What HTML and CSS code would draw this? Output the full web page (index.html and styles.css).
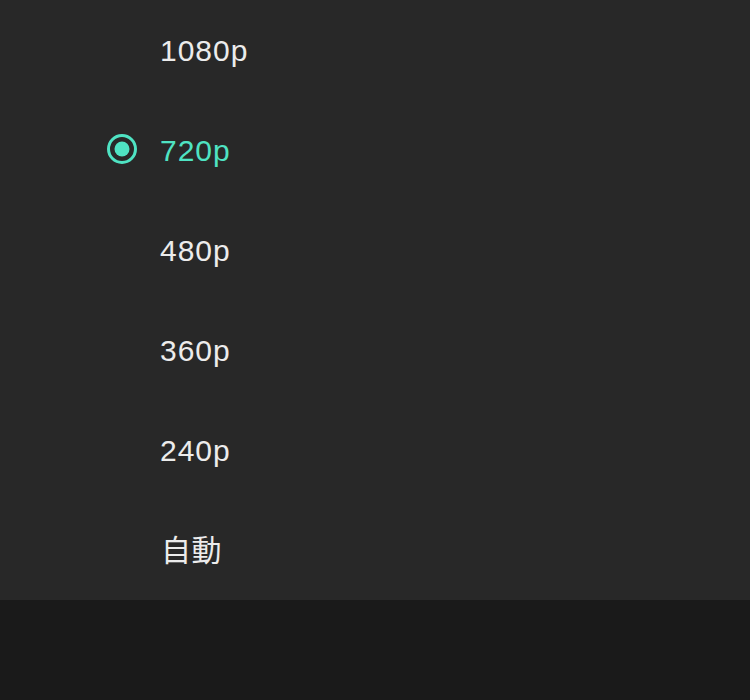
FILE: index.html
```html
<!DOCTYPE html>
<html lang="ja">
<head>
<meta charset="utf-8">
<link rel="stylesheet" href="styles.css">
</head>
<body>
<div class="sheet">
  <ul class="options">
    <li class="option"><span class="mark"></span><span class="label">1080p</span></li>
    <li class="option selected"><span class="mark"><svg width="30" height="30" viewBox="0 0 30 30"><circle cx="15" cy="15" r="13.5" fill="none" stroke="currentColor" stroke-width="3"/><circle cx="15" cy="15" r="7.5" fill="currentColor"/></svg></span><span class="label">720p</span></li>
    <li class="option"><span class="mark"></span><span class="label">480p</span></li>
    <li class="option"><span class="mark"></span><span class="label">360p</span></li>
    <li class="option"><span class="mark"></span><span class="label">240p</span></li>
    <li class="option"><span class="mark"></span><span class="label cjk">自動</span></li>
  </ul>
</div>
<div class="backdrop"></div>
</body>
</html>
```
FILE: styles.css
```css
html, body {
  margin: 0;
  padding: 0;
  background: #1a1a1a;
}
body {
  width: 750px;
  height: 700px;
  font-family: "Liberation Sans", "Noto Sans CJK JP", sans-serif;
}
.sheet {
  background: #282828;
  height: 600px;
}
.options {
  list-style: none;
  margin: 0;
  padding: 0;
}
.option {
  height: 100px;
  display: flex;
  align-items: center;
  padding-left: 107px;
  color: #ececec;
  font-size: 30px;
}
.mark {
  width: 30px;
  height: 30px;
  margin-right: 23px;
  display: flex;
  margin-top: -2px;
}
.label {
  line-height: 1;
  letter-spacing: 1px;
  padding-top: 2px;
}
.cjk {
  letter-spacing: 0.5px;
  padding-left: 1px;
}
.selected {
  color: #4fe3c3;
}
.backdrop {
  height: 100px;
}
```
